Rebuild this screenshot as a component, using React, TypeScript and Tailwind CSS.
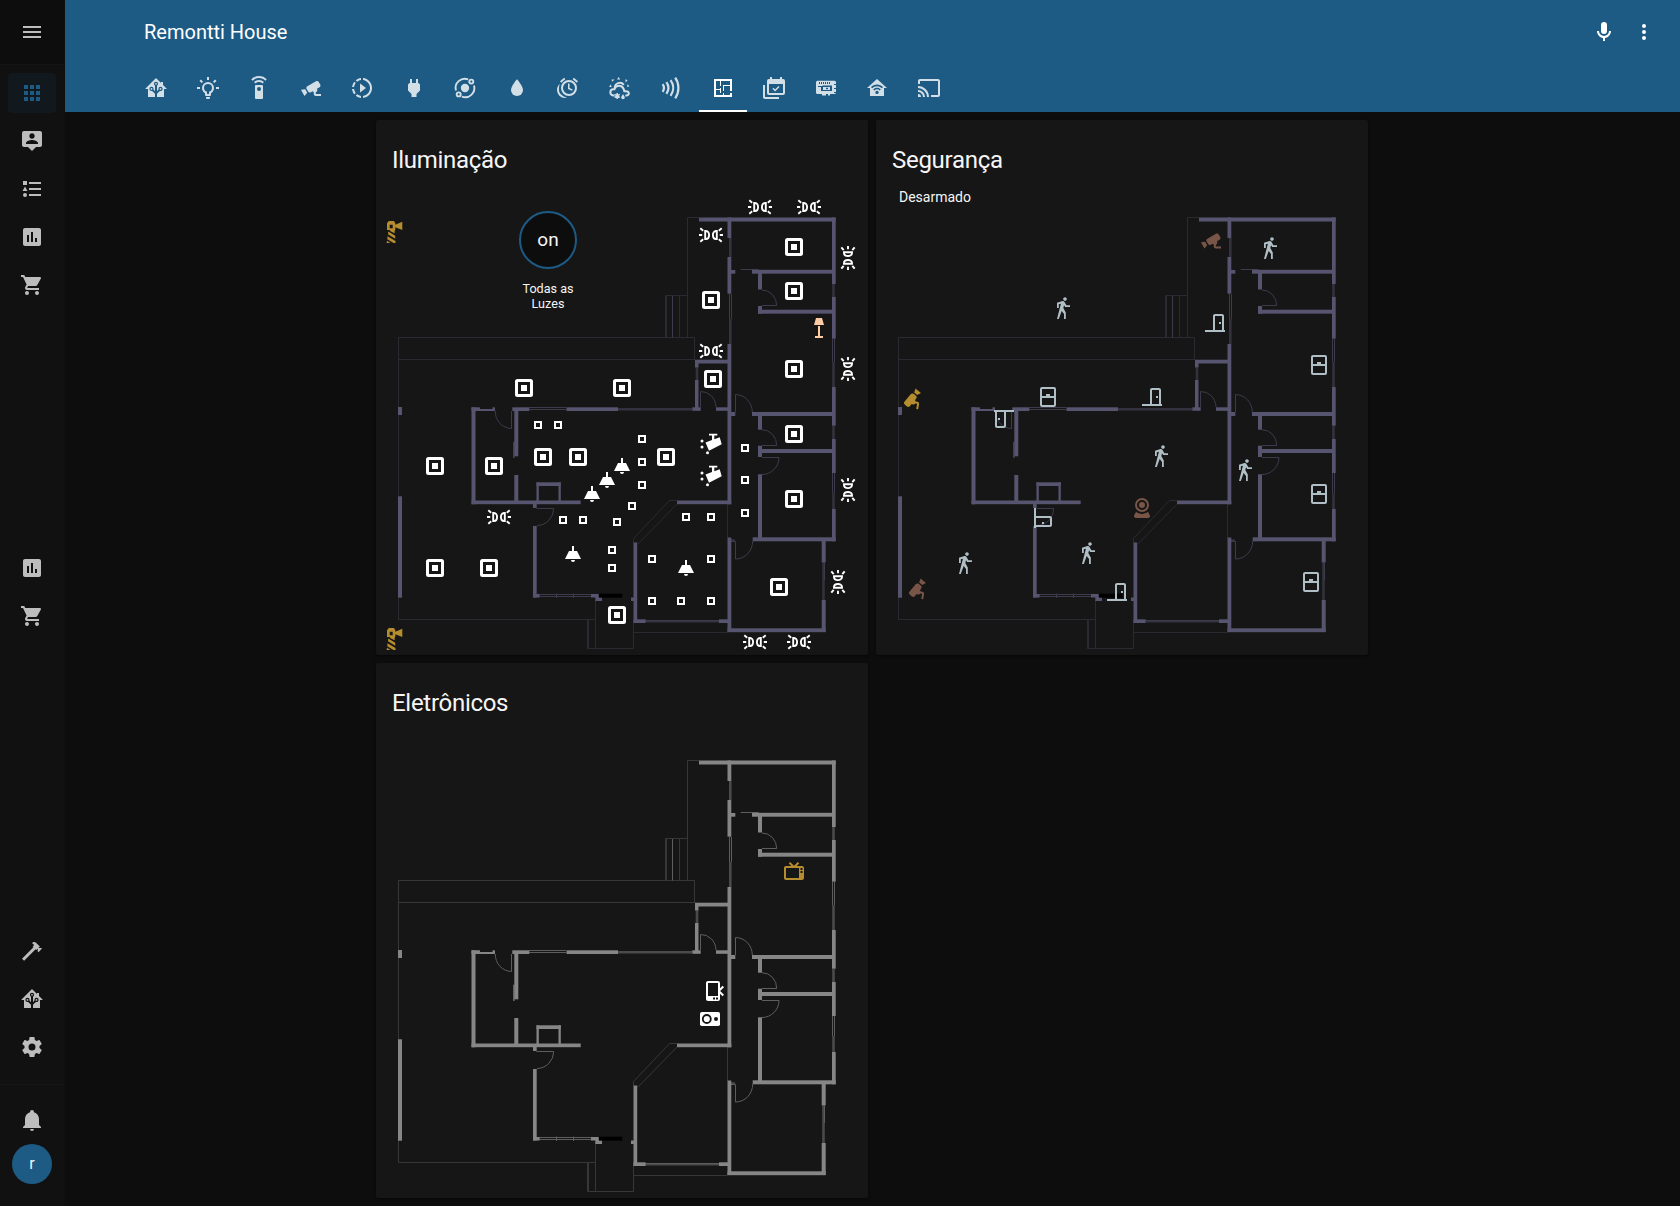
import React from "react";
import { MdSlowMotionVideo } from "react-icons/md";

const P = {
  menu: "M3,6H21V8H3V6M3,11H21V13H3V11M3,16H21V18H3V16Z",
  apps: "M16,20H20V16H16M16,14H20V10H16M10,8H14V4H10M16,8H20V4H16M10,14H14V10H10M4,14H8V10H4M4,20H8V16H4M10,20H14V16H10M4,8H8V4H4V8Z",
  person:
    "M20,2H4A2,2 0 0,0 2,4V16A2,2 0 0,0 4,18H8L12,22L16,18H20A2,2 0 0,0 22,16V4C22,2.89 21.1,2 20,2M12,4.3C13.5,4.3 14.7,5.5 14.7,7C14.7,8.5 13.5,9.7 12,9.7C10.5,9.7 9.3,8.5 9.3,7C9.3,5.5 10.5,4.3 12,4.3M18,15H6V14.1C6,12.1 10,11 12,11C14,11 18,12.1 18,14.1V15Z",
  list: "M5,9.5L7.5,14H2.5L5,9.5M3,4H7V8H3V4M5,20A2,2 0 0,0 7,18A2,2 0 0,0 5,16A2,2 0 0,0 3,18A2,2 0 0,0 5,20M9,5V7H21V5H9M9,19H21V17H9V19M9,13H21V11H9V13Z",
  chart:
    "M19,3H5C3.9,3 3,3.9 3,5V19C3,20.1 3.9,21 5,21H19C20.1,21 21,20.1 21,19V5C21,3.9 20.1,3 19,3M9,17H7V10H9V17M13,17H11V7H13V17M17,17H15V13H17V17Z",
  cart: "M17,18C15.89,18 15,18.89 15,20A2,2 0 0,0 17,22A2,2 0 0,0 19,20C19,18.89 18.1,18 17,18M1,2V4H3L6.6,11.59L5.24,14.04C5.09,14.32 5,14.65 5,15A2,2 0 0,0 7,17H19V15H7.42A0.25,0.25 0 0,1 7.17,14.75C7.17,14.7 7.18,14.66 7.2,14.63L8.1,13H15.55C16.3,13 16.96,12.58 17.3,11.97L20.88,5.5C20.95,5.34 21,5.17 21,5A1,1 0 0,0 20,4H5.21L4.27,2M7,18C5.89,18 5,18.89 5,20A2,2 0 0,0 7,22A2,2 0 0,0 9,20C9,18.89 8.1,18 7,18Z",
  hammer:
    "M2,19.63L13.43,8.2L12.72,7.5L14.14,6.07L12,3.89C13.2,2.7 15.09,2.7 16.27,3.89L19.87,7.5L18.45,8.91H21.29L22,9.62L18.45,13.21L17.74,12.5V9.62L16.27,11.04L15.56,10.33L4.13,21.76L2,19.63Z",
  cog: "M12,15.5A3.5,3.5 0 0,1 8.5,12A3.5,3.5 0 0,1 12,8.5A3.5,3.5 0 0,1 15.5,12A3.5,3.5 0 0,1 12,15.5M19.43,12.97C19.47,12.65 19.5,12.33 19.5,12C19.5,11.67 19.47,11.34 19.43,11L21.54,9.37C21.73,9.22 21.78,8.95 21.66,8.73L19.66,5.27C19.54,5.05 19.27,4.96 19.05,5.05L16.56,6.05C16.04,5.66 15.5,5.32 14.87,5.07L14.5,2.42C14.46,2.18 14.25,2 14,2H10C9.75,2 9.54,2.18 9.5,2.42L9.13,5.07C8.5,5.32 7.96,5.66 7.44,6.05L4.95,5.05C4.73,4.96 4.46,5.05 4.34,5.27L2.34,8.73C2.21,8.95 2.27,9.22 2.46,9.37L4.57,11C4.53,11.34 4.5,11.67 4.5,12C4.5,12.33 4.53,12.65 4.57,12.97L2.46,14.63C2.27,14.78 2.21,15.05 2.34,15.27L4.34,18.73C4.46,18.95 4.73,19.03 4.95,18.95L7.44,17.94C7.96,18.34 8.5,18.68 9.13,18.93L9.5,21.58C9.54,21.82 9.75,22 10,22H14C14.25,22 14.46,21.82 14.5,21.58L14.87,18.93C15.5,18.67 16.04,18.34 16.56,17.94L19.05,18.95C19.27,19.03 19.54,18.95 19.66,18.73L21.66,15.27C21.78,15.05 21.73,14.78 21.54,14.63L19.43,12.97Z",
  bell: "M21,19V20H3V19L5,17V11C5,7.9 7.03,5.17 10,4.29C10,4.19 10,4.1 10,4A2,2 0 0,1 12,2A2,2 0 0,1 14,4C14,4.1 14,4.19 14,4.29C16.97,5.17 19,7.9 19,11V17L21,19M14,21A2,2 0 0,1 12,23A2,2 0 0,1 10,21",
  house:
    "M21.8,13H20V21H13V17.67L15.79,14.88L16.5,15C17.66,15 18.6,14.06 18.6,12.9C18.6,11.74 17.66,10.8 16.5,10.8A2.1,2.1 0 0,0 14.4,12.9L14.5,13.61L13,15.13V9.65C13.66,9.29 14.1,8.6 14.1,7.8A2.1,2.1 0 0,0 12,5.7A2.1,2.1 0 0,0 9.9,7.8C9.9,8.6 10.34,9.29 11,9.65V15.13L9.5,13.61L9.6,12.9A2.1,2.1 0 0,0 7.5,10.8A2.1,2.1 0 0,0 5.4,12.9A2.1,2.1 0 0,0 7.5,15L8.21,14.88L11,17.67V21H4V13H2.25C1.83,13 1.42,13 1.42,12.79C1.43,12.57 1.85,12.15 2.28,11.72L11,3C11.33,2.67 11.67,2.33 12,2.33C12.33,2.33 12.67,2.67 13,3L17,7V6H19V9L21.78,11.78C22.18,12.18 22.59,12.59 22.6,12.8C22.6,13 22.2,13 21.8,13M7.5,12A0.9,0.9 0 0,1 8.4,12.9A0.9,0.9 0 0,1 7.5,13.8A0.9,0.9 0 0,1 6.6,12.9A0.9,0.9 0 0,1 7.5,12M16.5,12C17,12 17.4,12.4 17.4,12.9C17.4,13.4 17,13.8 16.5,13.8A0.9,0.9 0 0,1 15.6,12.9A0.9,0.9 0 0,1 16.5,12M12,6.9C12.5,6.9 12.9,7.3 12.9,7.8C12.9,8.3 12.5,8.7 12,8.7C11.5,8.7 11.1,8.3 11.1,7.8C11.1,7.3 11.5,6.9 12,6.9Z",
  bulb: "M20,11H23V13H20V11M1,11H4V13H1V11M13,1V4H11V1H13M4.92,3.5L7.05,5.64L5.63,7.05L3.5,4.93L4.92,3.5M16.95,5.63L19.07,3.5L20.5,4.93L18.37,7.05L16.95,5.63M12,6A6,6 0 0,1 18,12C18,14.22 16.79,16.16 15,17.2V19A1,1 0 0,1 14,20H10A1,1 0 0,1 9,19V17.2C7.21,16.16 6,14.22 6,12A6,6 0 0,1 12,6M14,21V22A1,1 0 0,1 13,23H11A1,1 0 0,1 10,22V21H14M11,18H13V15.87C14.73,15.43 16,13.86 16,12A4,4 0 0,0 12,8A4,4 0 0,0 8,12C8,13.86 9.27,15.43 11,15.87V18Z",
  remote:
    "M12,0C8.96,0 6.21,1.23 4.22,3.22L5.63,4.63C7.26,3 9.5,2 12,2C14.5,2 16.74,3 18.36,4.64L19.77,3.23C17.79,1.23 15.04,0 12,0M7.05,6.05L8.46,7.46C9.37,6.56 10.62,6 12,6C13.38,6 14.63,6.56 15.54,7.46L16.95,6.05C15.68,4.78 13.93,4 12,4C10.07,4 8.32,4.78 7.05,6.05M12,15A2,2 0 0,1 10,13A2,2 0 0,1 12,11A2,2 0 0,1 14,13A2,2 0 0,1 12,15M15,9H9A1,1 0 0,0 8,10V22A1,1 0 0,0 9,23H15A1,1 0 0,0 16,22V10A1,1 0 0,0 15,9Z",
  cctv: "M18.15,4.94C17.77,4.91 17.37,5 17,5.2L8.35,10.2C7.39,10.76 7.07,12 7.62,12.94L9.12,15.53C9.67,16.5 10.89,16.82 11.85,16.27L13.65,15.23C13.92,15.69 14.32,16.06 14.81,16.27V18.04C14.81,19.13 15.7,20 16.81,20H22V18.04H16.81V16.27C17.72,15.87 18.31,14.97 18.31,14C18.31,13.54 18.19,13.11 17.97,12.73L20.5,11.27C21.47,10.71 21.8,9.5 21.24,8.53L19.74,5.94C19.4,5.34 18.79,5 18.15,4.94M6.22,13.17L2,13.87L2.75,15.17L4.75,18.63L5.5,19.93L8.22,16.63L6.22,13.17Z",
  plug: "M16,7V3H14V7H10V3H8V7H8C7,7 6,8 6,9V14.5L9.5,18V21H14.5V18L18,14.5V9C18,8 17,7 16,7Z",
  water: "M12,20A6,6 0 0,1 6,14C6,10 12,3.25 12,3.25C12,3.25 18,10 18,14A6,6 0 0,1 12,20Z",
  alarm:
    "M9.29,3.25L5.16,6.72L4,5.34L8.14,1.87L9.29,3.25M22,5.35L20.84,6.73L16.7,3.25L17.86,1.87L22,5.35M13,4A8,8 0 0,1 21,12A8,8 0 0,1 13,20A8,8 0 0,1 5,12A8,8 0 0,1 13,4M13,6A6,6 0 0,0 7,12A6,6 0 0,0 13,18A6,6 0 0,0 19,12A6,6 0 0,0 13,6M12,7.5H13.5V12.03L16.72,13.5L16.1,14.86L12,13V7.5M1,14C1,11.5 2.13,9.3 3.91,7.83C3.33,9.1 3,10.5 3,12L3.06,13.13L3,14C3,16.28 4.27,18.26 6.14,19.28C7.44,20.5 9.07,21.39 10.89,21.78C10.28,21.92 9.65,22 9,22A8,8 0 0,1 1,14Z",
  plan: "M10,5V10H9V5H5V13H9V12H10V17H9V14H5V19H12V17H13V19H19V17H21V21H3V3H21V15H19V10H13V15H12V9H19V5H10Z",
  calendar:
    "M21,17V8H7V17H21M21,3A2,2 0 0,1 23,5V17A2,2 0 0,1 21,19H7C5.89,19 5,18.1 5,17V5A2,2 0 0,1 7,3H8V1H10V3H18V1H20V3H21M17.53,11.06L13.09,15.5L10.41,12.82L11.47,11.76L13.09,13.38L16.47,10L17.53,11.06M3,21H17V23H3C1.89,23 1,22.1 1,21V9H3V21Z",
  cast: "M1,10V12A9,9 0 0,1 10,21H12C12,14.92 7.07,10 1,10M1,14V16A5,5 0 0,1 6,21H8A7,7 0 0,0 1,14M1,18V21H4A3,3 0 0,0 1,18M21,3H3C1.89,3 1,3.89 1,5V8H3V5H21V19H14V21H21A2,2 0 0,0 23,19V5C23,3.89 22.1,3 21,3Z",
  mic: "M12,2A3,3 0 0,1 15,5V11A3,3 0 0,1 12,14A3,3 0 0,1 9,11V5A3,3 0 0,1 12,2M19,11C19,14.53 16.39,17.44 13,17.93V21H11V17.93C7.61,17.44 5,14.53 5,11H7A5,5 0 0,0 12,16A5,5 0 0,0 17,11H19Z",
  dots: "M12,16A2,2 0 0,1 14,18A2,2 0 0,1 12,20A2,2 0 0,1 10,18A2,2 0 0,1 12,16M12,10A2,2 0 0,1 14,12A2,2 0 0,1 12,14A2,2 0 0,1 10,12A2,2 0 0,1 12,10M12,4A2,2 0 0,1 14,6A2,2 0 0,1 12,8A2,2 0 0,1 10,6A2,2 0 0,1 12,4Z",
  walk: "M14.12,10H19V8.2H15.38L13.38,4.87C13.08,4.37 12.54,4.03 11.92,4.03C11.74,4.03 11.58,4.06 11.42,4.11L6,5.8V11H7.8V7.33L9.91,6.67L6,22H7.8L10.67,13.89L13,17V22H14.8V15.59L12.31,11.05L13.04,8.18M14,3.8C15,3.8 15.8,3 15.8,2C15.8,1 15,0.2 14,0.2C13,0.2 12.2,1 12.2,2C12.2,3 13,3.8 14,3.8Z",
  door: "M16,11H18V13H16V11M12,3H19C20.11,3 21,3.89 21,5V19H22V21H2V19H10V5C10,3.89 10.89,3 12,3M12,5V19H19V5H12Z",
  window:
    "M6,11H10V9H14V11H18V4H6V11M18,13H6V20H18V13M6,2H18A2,2 0 0,1 20,4V20A2,2 0 0,1 18,22H6A2,2 0 0,1 4,20V4A2,2 0 0,1 6,2Z",
  webcam:
    "M12,2A7,7 0 0,1 19,9A7,7 0 0,1 12,16A7,7 0 0,1 5,9A7,7 0 0,1 12,2M12,4A5,5 0 0,0 7,9A5,5 0 0,0 12,14A5,5 0 0,0 17,9A5,5 0 0,0 12,4M12,6A3,3 0 0,1 15,9A3,3 0 0,1 12,12A3,3 0 0,1 9,9A3,3 0 0,1 12,6M6,22A2,2 0 0,1 4,20C4,19.62 4.1,19.27 4.29,18.97L6.11,15.81C7.69,17.17 9.75,18 12,18C14.25,18 16.31,17.17 17.89,15.81L19.71,18.97C19.9,19.27 20,19.62 20,20A2,2 0 0,1 18,22H6Z",
  tv: "M8.16,3L6.75,4.41L9.34,7H4C2.89,7 2,7.89 2,9V19C2,20.11 2.89,21 4,21H20C21.11,21 22,20.11 22,19V9C22,7.89 21.11,7 20,7H14.66L17.25,4.41L15.84,3L12,6.84L8.16,3M4,9H17V19H4V9M18.5,9H20.5V11H18.5V9M18.5,12H20.5V14H18.5V12Z",
  pendant: "M8,9H11V4H13V9H16L20,17H4L8,9M14,18A2,2 0 0,1 12,20A2,2 0 0,1 10,18H14Z",
};

function Icon({ d, children }: { d?: string; children?: React.ReactNode }) {
  return (
    <svg viewBox="0 0 24 24" className="h-6 w-6 shrink-0 fill-current">
      {d && <path fillRule="evenodd" d={d} />}
      {children}
    </svg>
  );
}

const OrbitIcon = () => (
  <Icon>
    <circle cx="12" cy="12" r="4.2" />
    <g fill="none" stroke="currentColor" strokeWidth="1.9">
      <path d="M3 14.5A9.2 9.2 0 0 1 15.2 3.4M21 9.5A9.2 9.2 0 0 1 8.8 20.6" />
      <circle cx="18.3" cy="5.6" r="2" />
      <circle cx="5.7" cy="18.4" r="2" />
    </g>
  </Icon>
);

const WeatherIcon = () => (
  <Icon>
    <g fill="none" stroke="currentColor" strokeWidth="2">
      <path d="M6.800 12A5 5 0 0 1 15.800 8.800" />
      <path d="M6.500 19.400H5.300a3.100 3.100 0 0 1 .3-6.200h.8a4.800 4.800 0 0 1 9.200-.2c.5 1 .6 1.600.7 2.200h1.600c3.800 0 3.800 4.200.5 4.200h-1.100" />
      <path d="M9.200 16.900v6M6.600 18.400l5.200 3M11.800 18.400l-5.200 3" strokeWidth="1.500" />
    </g>
    <path d="M15 18.200s1.800 2.200 1.800 3.300a1.800 1.800 0 0 1-3.600 0c0-1.100 1.800-3.300 1.800-3.300zM10.500 1l1.800 2.400-3.200 0zM3.300 3.700l3-.4-1.700 2.500zM17.400 3.300l2.200 1-2 2.200zM1 10.700l2-2.400.5 3zM19.500 8.300l2 2-2.400.8z" />
  </Icon>
);

const WavesIcon = () => (
  <Icon>
    <path
      fill="none"
      stroke="currentColor"
      strokeWidth="2.200"
      d="M3.700 8.200c1.500 2.300 1.500 5.300 0 7.600M7.400 6.200c2.500 3.500 2.500 8.100 0 11.600M11.600 4.200c3.400 4.700 3.400 10.900 0 15.600M16.200 1.700c4.300 6.200 4.300 14.400 0 20.600"
    />
  </Icon>
);

const BoardIcon = () => (
  <Icon d="M3.500 4.700H20.500A1.500 1.500 0 0 1 22 6.200V8H20V9H22V12H20V13H22V16H20V17H22A1.500 1.500 0 0 1 20.500 18H16V19.500H14V18H12V19.500H8V18H3.500A1.500 1.500 0 0 1 2 16.500V6.200A1.500 1.500 0 0 1 3.500 4.700M5 6V8H6V6M7 6V8H8V6M9 6V8H10V6M11 6V8H12V6M13 6V8H14V6M15 6V8H16V6M4 10V11H7V15H18V9.500H8.500V10M9 11H16V14H9M12 11.700V13.300H14V11.700" />
);

const WifiHouseIcon = () => (
  <Icon d="M12 3L22 12H19V20H5V12H2L12 3M12 8.500C9.600 8.500 7.500 9.500 6 11L7.100 12.200A7 7 0 0 1 16.900 12.200L18 11C16.500 9.500 14.400 8.500 12 8.500M12 11.800C10.500 11.800 9.200 12.400 8.200 13.400L9.400 14.600A3.700 3.700 0 0 1 14.600 14.600L15.800 13.400C14.800 12.400 13.500 11.800 12 11.800M12 14.700A1.700 1.700 0 1 0 12 18.100A1.700 1.700 0 0 0 12 14.700Z" />
);

/* Filled wall pieces: x1, y1, x2, y2 */
const WALLS = [
  [699, 217.5, 835.7, 221.5], [727.5, 217.5, 731.3, 238], [727.5, 257, 731.3, 293.7], [727.5, 344, 731.3, 504.3],
  [727.5, 537.5, 731.3, 632], [731, 270, 735.3, 273.7], [752, 269.8, 834, 273.7], [758, 273, 762, 289.5],
  [758, 306, 762, 313.7], [758, 309.7, 834, 313.7], [832, 217.5, 835.7, 284], [832, 297, 835.7, 338.7],
  [832, 387, 835.7, 425.7], [832, 439, 835.7, 473], [832, 509, 835.7, 541.3], [752, 412, 834, 416],
  [731, 412, 735.3, 416], [758, 416, 762, 429.7], [758, 445.7, 762, 457], [758, 474.3, 762, 538],
  [762, 449, 834, 453], [752.7, 537.3, 835.7, 541.3], [821.7, 541, 825.7, 562.3], [821.7, 600, 825.7, 632],
  [727.5, 628.3, 825.7, 632.2], [695, 359.7, 728, 363.5], [695, 363, 698.5, 367.5], [695, 380, 698.5, 408],
  [692.3, 407.3, 700.7, 410.8], [716, 407.3, 728, 410.8], [512.3, 407.3, 529.3, 411], [566.5, 407.3, 618, 411],
  [471.5, 407.3, 480, 411], [480, 409, 495, 411], [492.5, 407.3, 495, 411], [471.5, 407.3, 475.5, 504.3],
  [471.5, 500.5, 580.7, 504.2], [514.3, 411, 518.3, 456.3], [514.3, 475, 518.3, 501], [513.3, 441.7, 514.5, 458],
  [536.5, 482.3, 560.8, 486], [536.5, 482.3, 538.8, 501], [558.5, 482.3, 560.8, 501], [533, 504, 536.7, 508],
  [533, 526, 536.7, 597.5], [533, 594, 539.7, 597.5], [591, 594, 598.7, 597.5], [595.3, 597, 602, 601],
  [631, 597.5, 634, 601], [633.5, 542.5, 637.2, 623], [633.5, 619.3, 645.7, 623], [719, 619.3, 728, 623],
  [677, 500.5, 731.3, 504.2], [398, 407, 402, 415], [398, 496.3, 402, 597.7],
];

function FloorPlan({ wall, mid, band, thin }: { wall: string; mid: string; band: string; thin: string }) {
  return (
    <g>
      <path
        fill="none"
        stroke={thin}
        d="M398.500 619.500V337.500H694.500V360M398.500 359.500H694.500M687.500 337.500V217.500H699M665.500 337.500V295.500H687.500M666.500 337.500V296M679.500 337.500V296M398.500 619.500H595.500M587.500 619.500V648.500H633.500M588.500 619.500V648M595.500 600V648.500M633.500 623V648.500M633.500 632.500H727.500M727.500 504V538M669.500 500.500L633.500 538.500V543M677 504L637.500 544.500M669.500 500.500H677"
      />
      <path
        fill="none"
        stroke={band}
        strokeWidth="2.600"
        d="M730.300 238V257M730.300 319V344M697 367.500V380M833.500 284V297M833.500 362V387M833.500 426V439M833.500 493V509M823.500 562V600M618 409.300H692M645.700 621.300H719M731 540.500H735"
      />
      <path
        fill="none"
        stroke={mid}
        strokeWidth="1"
        d="M672.500 337.500V296M740.700 269.500H758.700M762 290A14.700 15.500 0 0 1 776.700 305.500H762M735.500 412V394.500A17 17.500 0 0 1 752.300 412M762 429.700A14.700 15.500 0 0 1 776.700 445.500H762M762 457.500H779A17 17 0 0 1 762 474.500M731 541.500H735.500V559A17 18 0 0 0 752.700 541M700.500 407V391.500A15 16 0 0 1 716 407M495.300 411A16.500 17 0 0 0 511.500 428.500V411M536.500 508.500H553.700A17 17 0 0 1 537 525.500M529 407.500H566M529 409.500H566M539.700 594.500H591M539.700 596.500H591M556.500 593.500V598M573.500 593.500V598M645.700 620.500H719M729.500 294V319M731.500 294V319M832.500 339V362M834.500 339V362M832.500 473V493M834.500 473V493M824.500 562V580"
      />
      <g fill={wall}>
        {WALLS.map(([a, b, c, d], i) => (
          <rect key={i} x={a} y={b} width={c - a} height={d - b} />
        ))}
      </g>
      <rect x="599" y="593.700" width="23.300" height="4" fill="#000" />
    </g>
  );
}

function Mark({ x, y, d, color = "#fff", t = "" }: { x: number; y: number; d: string; color?: string; t?: string }) {
  return (
    <g transform={`translate(${x} ${y}) ${t}`}>
      <path transform="translate(-12 -12)" fillRule="evenodd" fill={color} d={d} />
    </g>
  );
}

const BIG = [
  [524, 388], [622, 388], [794, 247], [794, 291], [711, 300], [794, 369], [713, 379], [435, 466], [494, 466],
  [543, 457], [578, 457], [435, 568], [489, 568], [617, 615], [666, 457], [794, 434], [794, 499], [779, 587],
];
const SMALL = [
  [538, 425], [558, 425], [642, 439], [642, 462], [642, 485], [632, 506], [563, 520], [583, 520], [617, 522],
  [612, 550], [612, 568], [745, 448], [745, 480], [745, 513], [686, 517], [711, 517], [652, 559], [711, 559],
  [652, 601], [681, 601], [711, 601],
];
const PENDANTS = [[622, 466], [607, 480], [592, 494], [573, 554], [686, 568]];
const SCONCES = [
  [760, 207, 0], [809, 207, 0], [711, 235, 0], [711, 351, 0], [499, 517, 0], [755, 642, 0], [799, 642, 0],
  [848, 258, 90], [848, 369, 90], [848, 490, 90], [838, 582, 90],
];

const Lighthouse = ({ y }: { y: number }) => (
  <g transform={`translate(386 ${y})`} fill="#b58c2e">
    <path fillRule="evenodd" d="M2.800 0H8L9.300 2.300V3.700L16.300 .8V9L9.300 6.200V9H1V2.300M3.700 3.700V7.200H6.700V3.700Z" />
    <path d="M4.500 9H8.800L8.600 12.300L3.500 9.700ZM2.300 10.500L9.200 14.800V17.800L2 13.300ZM1.500 15.300L9.500 20V22H7.500L1.300 18.300ZM1 19.800L4.500 22H.6Z" />
  </g>
);

function Lights() {
  return (
    <g>
      {BIG.map(([x, y]) => (
        <g key={`${x}-${y}`} fill="none" stroke="#fff">
          <rect x={x - 7.5} y={y - 7.5} width="15" height="15" rx="1" strokeWidth="3" />
          <rect x={x - 3} y={y - 3} width="6" height="6" fill="#fff" stroke="none" />
        </g>
      ))}
      {SMALL.map(([x, y]) => (
        <rect key={`${x}-${y}`} x={x - 3} y={y - 3} width="6" height="6" fill="none" stroke="#fff" strokeWidth="2" />
      ))}
      {PENDANTS.map(([x, y]) => (
        <Mark key={`${x}-${y}`} x={x} y={y} d={P.pendant} />
      ))}
      {SCONCES.map(([x, y, r]) => (
        <g key={`${x}-${y}`} transform={`translate(${x} ${y}) rotate(${r})`} fill="none" stroke="#fff" strokeWidth="1.900">
          <path d="M-5.800-4V4H-5C-.9 4-.9-4-5-4ZM5.800-4V4H5C.9 4 .9-4 5-4Z" />
          <path d="M-12 0H-8.800M-10.700-6.700L-7.800-4.300M-10.700 6.700L-7.800 4.300M12 0H8.800M10.700-6.700L7.800-4.300M10.700 6.700L7.800 4.300" />
        </g>
      ))}
      {[443.5, 475.5].map((y) => (
        <g key={y} transform={`translate(711 ${y})`} fill="#fff">
          <path d="M-5.500-1L1-3.500V-8H-2V-9.700H6.300V-8H3.300V-4.200L8.700-6.200 10.700.7-2 7.200Z" />
          <circle cx="-9" cy="-2.500" r="1.500" />
          <circle cx="-9" cy="3.500" r="1.500" />
          <circle cx="-3.500" cy="9.300" r="1.500" />
        </g>
      ))}
      <path fill="#ffcba4" d="M816 318H822L824 325H814ZM818 326H820V336H823V338H815V336H818Z" />
      <Lighthouse y={221} />
      <Lighthouse y={628} />
    </g>
  );
}

const PALE = "#b0bec5";
const BROWN = "#795548";
const AMBER = "#b58c2e";

/* Positions share the coordinate space of the lights plan */
function Security() {
  return (
    <g>
      {[[563, 309], [465, 564], [588, 554], [770, 249], [661, 457], [745, 471]].map(([x, y]) => (
        <Mark key={`${x}-${y}`} x={x} y={y} d={P.walk} color={PALE} />
      ))}
      {[[715, 323, ""], [652, 397, ""], [617, 592, ""], [504, 419, "rotate(180)"], [543, 518, "rotate(90)"]].map(
        ([x, y, t]) => (
          <Mark key={`${x}-${y}`} x={x as number} y={y as number} t={t as string} d={P.door} color={PALE} />
        ),
      )}
      {[[548, 397], [819, 365], [819, 494], [811, 582]].map(([x, y]) => (
        <Mark key={`${x}-${y}`} x={x} y={y} d={P.window} color={PALE} />
      ))}
      <Mark x={711} y={240.5} d={P.cctv} color={BROWN} />
      <Mark x={412} y={398} t="rotate(-80) scale(-1 1)" d={P.cctv} color={AMBER} />
      <Mark x={417} y={588} t="rotate(-80) scale(-1 1)" d={P.cctv} color={BROWN} />
      <Mark x={642} y={508} d={P.webcam} color={BROWN} />
    </g>
  );
}

function Electronics() {
  return (
    <g>
      <Mark x={794} y={328} d={P.tv} color={AMBER} />
      <Mark x={715} y={448} t="rotate(90)" d={P.tv} />
      <rect x="700" y="469" width="20" height="14" rx="1.800" fill="#fff" />
      <circle cx="706.800" cy="476" r="4" fill="none" stroke="#161616" strokeWidth="1.800" />
      <circle cx="716" cy="476" r="2" fill="#161616" />
    </g>
  );
}

function Card({
  title,
  gray,
  children,
  overlay,
}: {
  title: string;
  gray?: boolean;
  children: React.ReactNode;
  overlay?: React.ReactNode;
}) {
  return (
    <section className="relative h-[535px] w-[492px] rounded-xs bg-[#161616] shadow-[0_1px_3px_rgba(0,0,0,0.5)]">
      <svg viewBox="376 120 492 535" className="absolute inset-0 h-full w-full">
        {gray ? (
          <FloorPlan wall="#868686" mid="#5e5e5e" band="#4a4a4a" thin="#373737" />
        ) : (
          <FloorPlan wall="#56546e" mid="#3d3b4b" band="#33323e" thin="#2b2a30" />
        )}
        {children}
      </svg>
      <h2 className="relative px-4 pt-6 text-2xl leading-8 tracking-[-0.012em] text-[#f5f5f5]">{title}</h2>
      {overlay}
    </section>
  );
}

function NavItem({ d, active }: { d: string; active?: boolean }) {
  return (
    <a
      className={
        active
          ? "flex h-10 w-12 items-center justify-center rounded bg-[#11191f] text-[#1d5b85]"
          : "flex h-10 w-12 items-center justify-center rounded text-[#bdbdbd]"
      }
    >
      <Icon d={d} />
    </a>
  );
}

const TABS: React.ReactNode[] = [
  <Icon d={P.house} />,
  <Icon d={P.bulb} />,
  <Icon d={P.remote} />,
  <Icon d={P.cctv} />,
  <MdSlowMotionVideo className="h-6 w-6" />,
  <Icon d={P.plug} />,
  <OrbitIcon />,
  <Icon d={P.water} />,
  <Icon d={P.alarm} />,
  <WeatherIcon />,
  <WavesIcon />,
  <Icon d={P.plan} />,
  <Icon d={P.calendar} />,
  <BoardIcon />,
  <WifiHouseIcon />,
  <Icon d={P.cast} />,
];

export default function App() {
  return (
    <div className="flex h-[1206px] w-[1680px] overflow-hidden bg-[#0d0d0d] font-['Roboto',sans-serif] text-[#f5f5f5]">
      <aside className="flex w-[65px] shrink-0 flex-col border-r border-[#0f0f0f] bg-[#111111]">
        <div className="flex h-[65px] items-center justify-center border-b border-[#141414] bg-[#0d0d0d] text-[#bdbdbd]">
          <Icon d={P.menu} />
        </div>
        <nav className="flex flex-1 flex-col gap-2 px-2 pt-2">
          <NavItem d={P.apps} active />
          <NavItem d={P.person} />
          <NavItem d={P.list} />
          <NavItem d={P.chart} />
          <NavItem d={P.cart} />
          <div className="mt-[227px]" />
          <NavItem d={P.chart} />
          <NavItem d={P.cart} />
          <div className="flex-1" />
          <NavItem d={P.hammer} />
          <NavItem d={P.house} />
          <NavItem d={P.cog} />
        </nav>
        <div className="mt-[17px] flex h-[122px] flex-col items-center border-t border-[#151515] pt-[15px]">
          <NavItem d={P.bell} />
          <div className="mt-1 flex h-10 w-10 items-center justify-center rounded-full bg-[#1d5b85] text-base">r</div>
        </div>
      </aside>
      <div className="flex flex-1 flex-col">
        <header className="flex h-28 flex-col bg-[#1d5b85]">
          <div className="flex h-16 items-center pr-6 pl-[79px]">
            <h1 className="flex-1 text-xl text-white">Remontti House</h1>
            <div className="flex gap-4 text-white">
              <Icon d={P.mic} />
              <Icon d={P.dots} />
            </div>
          </div>
          <div className="flex h-12 gap-[3.53px] pl-[67px]">
            {TABS.map((icon, i) => (
              <div
                key={i}
                className={
                  i === 11
                    ? "flex w-12 items-center justify-center border-y-2 border-t-transparent border-b-white text-white"
                    : "flex w-12 items-center justify-center text-[#d3dfe7]"
                }
              >
                {icon}
              </div>
            ))}
          </div>
        </header>
        <main className="grid grid-cols-[492px_492px] content-start gap-2 pt-2 pl-[311px]">
          <Card
            title="Iluminação"
            overlay={
              <div className="absolute top-[91px] left-[132px] flex w-20 flex-col items-center">
                <div className="flex h-[58px] w-[58px] items-center justify-center rounded-full border-2 border-[#1d5b85] bg-[#0d0d0d] text-[19px]">
                  on
                </div>
                <div className="mt-3 w-16 text-center text-[12.6px] leading-[15px]">Todas as Luzes</div>
              </div>
            }
          >
            <Lights />
          </Card>
          <Card
            title="Segurança"
            overlay={<div className="absolute top-[67px] left-[23px] text-sm leading-5">Desarmado</div>}
          >
            <Security />
          </Card>
          <Card title="Eletrônicos" gray>
            <Electronics />
          </Card>
        </main>
      </div>
    </div>
  );
}
